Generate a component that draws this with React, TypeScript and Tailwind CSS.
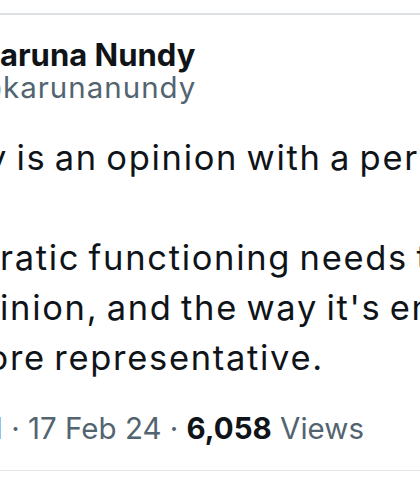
const font = "font-['Inter','Noto_Sans',sans-serif]";

export default function App() {
  return (
    <div className={`${font} h-[499px] w-[420px] overflow-hidden bg-white text-[#0f1419]`}>
      <div className="mt-[13px] border-t-2 border-[#dde1e3]" />

      {/* author */}
      <div className="mt-[24px] whitespace-nowrap text-[31px] font-bold leading-[32px]">aruna Nundy</div>
      <div className="flex whitespace-nowrap text-[29.5px] leading-[32px] tracking-[1px] text-[#536471]">
        <span className="flex w-[3px] shrink-0 justify-end overflow-hidden">
          <span className="shrink-0">@</span>
        </span>
        <span>karunanundy</span>
      </div>

      {/* tweet body */}
      <div className="mt-[30px] text-[34.5px] leading-[50px] tracking-[1.7px] [word-spacing:-3px]">
        <div className="flex whitespace-nowrap">
          <span className="flex w-[8px] shrink-0 justify-end overflow-hidden">
            <span className="shrink-0">y</span>
          </span>
          <span>&nbsp;is an opinion with a per</span>
        </div>
        <div className="h-[50px]" />
        <div className="whitespace-nowrap">ratic functioning needs t</div>
        <div className="whitespace-nowrap">inion, and the way it's en</div>
        <div className="flex whitespace-nowrap">
          <span className="flex w-[10px] shrink-0 justify-end overflow-hidden">
            <span className="shrink-0">o</span>
          </span>
          <span>re representative.</span>
        </div>
      </div>

      {/* meta */}
      <div className="mt-[25px] flex whitespace-nowrap text-[29.5px] leading-[40px] text-[#536471]">
        <span className="flex w-[3px] shrink-0 justify-end overflow-hidden">
          <span className="shrink-0">M</span>
        </span>
        <span>&nbsp;·&nbsp;17 Feb 24&nbsp;·&nbsp;</span>
        <span className="font-bold text-[#0f1419]">6,058</span>
        <span>&nbsp;Views</span>
      </div>

      <div className="mt-[22px] border-t border-[#e1e5e7]" />
    </div>
  );
}
